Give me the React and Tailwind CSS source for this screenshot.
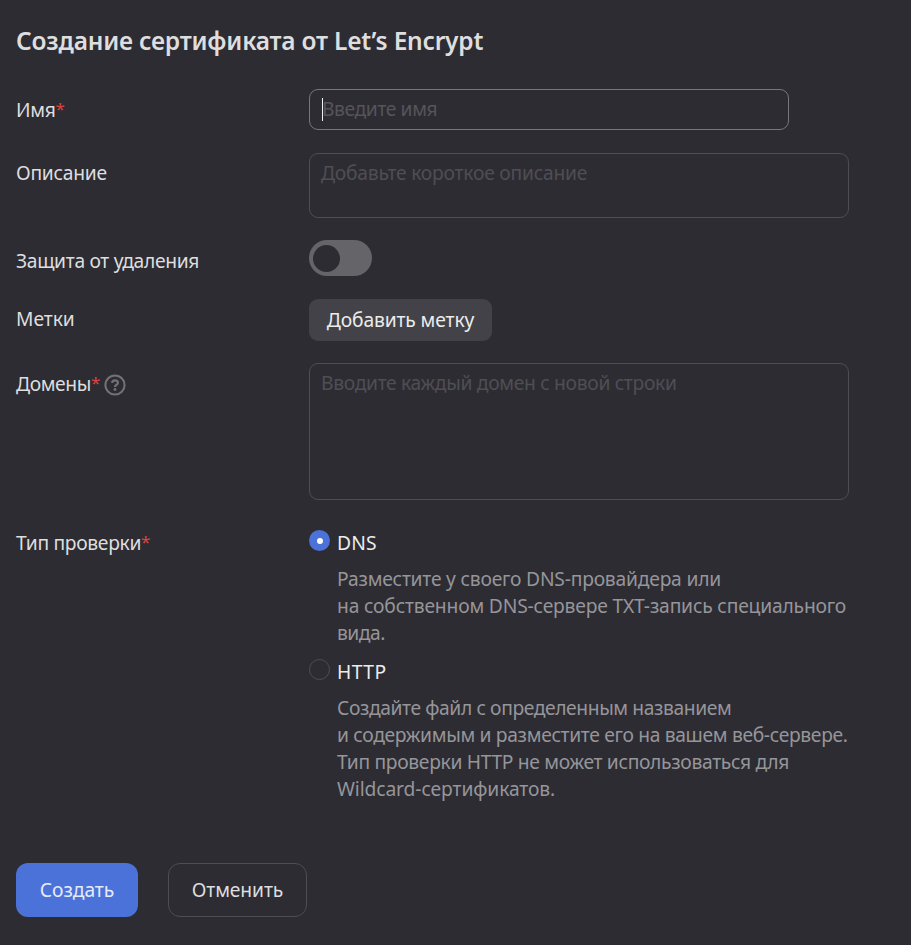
import { useState } from 'react'

const CHECK_TYPES = [
  {
    id: 'dns',
    title: 'DNS',
    titleTracking: 'tracking-[0.2px]',
    lines: [
      { text: 'Разместите у своего DNS-провайдера или', tracking: 'tracking-[-0.21px]' },
      { text: 'на собственном DNS-сервере TXT-запись специального', tracking: 'tracking-[-0.18px]' },
      { text: 'вида.', tracking: 'tracking-[-0.5px]' },
    ],
  },
  {
    id: 'http',
    title: 'HTTP',
    titleTracking: 'tracking-[0.5px]',
    lines: [
      { text: 'Создайте файл с определенным названием', tracking: 'tracking-[-0.4px]' },
      { text: 'и содержимым и разместите его на вашем веб-сервере.', tracking: 'tracking-[-0.33px]' },
      { text: 'Тип проверки HTTP не может использоваться для', tracking: 'tracking-[-0.32px]' },
      { text: 'Wildcard-сертификатов.', tracking: 'tracking-[-0.1px]' },
    ],
  },
]

function HelpIcon() {
  return (
    <svg className="size-[22px] text-[#737277]" viewBox="0 0 22 22" fill="none" stroke="currentColor" strokeWidth="2">
      <circle cx="11" cy="11" r="9.6" />
      <path d="M8.1 8.9C8.2 7.2 9.4 6.3 11 6.3c1.7 0 2.9.9 2.9 2.4 0 1.2-.8 1.8-1.6 2.3-.8.5-1.3.9-1.3 1.9" strokeWidth="2.2" />
      <circle cx="11" cy="15.5" r="1.4" fill="currentColor" stroke="none" />
    </svg>
  )
}

function Row({ label, required, help, className, labelClassName, children }) {
  return (
    <div className={`grid grid-cols-[293px_1fr] ${className}`}>
      <div className={`flex items-start ${labelClassName}`}>
        <span>{label}</span>
        {required && <span className="w-[8px] text-[17px] leading-[25px] text-[#d9453f]">*</span>}
        {help && <span className="mt-[4px] ml-[5px]"><HelpIcon /></span>}
      </div>
      <div className="flex flex-col items-start">{children}</div>
    </div>
  )
}

export default function App() {
  const [isProtected, setIsProtected] = useState(false)
  const [checkType, setCheckType] = useState('dns')

  return (
    <form
      className="h-[945px] overflow-hidden bg-[#2d2c33] px-4 font-['Noto_Sans','Liberation_Sans',sans-serif] text-[19.25px] leading-[27px] tracking-[-0.32px] text-[#dededf]"
      onSubmit={(e) => e.preventDefault()}
    >
      <h1 className="pt-[23px] text-[24.5px] leading-[36px] font-semibold tracking-[-0.2px] whitespace-nowrap">
        Создание сертификата от Let’s Encrypt
      </h1>

      <Row label="Имя" required className="mt-[30px]" labelClassName="pt-[7px]">
        <div className="relative">
          <input
            className="block h-[41px] w-[480px] rounded-[9px] border border-[#77767a] bg-transparent px-[12px] pb-[2px] tracking-[-0.4px] caret-transparent outline-none placeholder:text-[#55545a]"
            placeholder="Введите имя"
          />
          <span className="absolute top-[9px] left-[13px] h-[23px] w-px bg-[#f0f0f0]" />
        </div>
      </Row>

      <Row label="Описание" className="mt-[23px]" labelClassName="pt-[6px] tracking-[-0.25px]">
        <textarea
          className="block h-[65px] w-[540px] resize-none rounded-[9px] border border-[#4e4d53] bg-transparent px-[11px] pt-[5px] tracking-[-0.22px] outline-none placeholder:text-[#4f4e54]"
          placeholder="Добавьте короткое описание"
        />
      </Row>

      <Row label="Защита от удаления" className="mt-[22px]" labelClassName="h-[36px] pt-[7px]">
        <button
          type="button"
          role="switch"
          aria-checked={isProtected}
          onClick={() => setIsProtected(!isProtected)}
          className={`flex h-[36px] w-[63px] items-center rounded-full bg-[#656468] px-[4px] ${isProtected ? 'justify-end' : 'justify-start'}`}
        >
          <span className="size-[27px] rounded-full bg-[#2d2c33]" />
        </button>
      </Row>

      <Row label="Метки" className="mt-[23px]" labelClassName="pt-[6px] tracking-[-0.05px]">
        <button type="button" className="h-[42px] w-[183px] rounded-[9px] bg-[#434248] pb-[2px] tracking-[-0.12px] whitespace-nowrap text-[#ececec]">
          Добавить метку
        </button>
      </Row>

      <Row label="Домены" required help className="mt-[22px]" labelClassName="pt-[7px] tracking-[-0.4px]">
        <textarea
          className="block h-[137px] w-[540px] resize-none rounded-[9px] border border-[#4e4d53] bg-transparent px-[11px] pt-[5px] tracking-[-0.32px] outline-none placeholder:text-[#4f4e54]"
          placeholder="Вводите каждый домен с новой строки"
        />
      </Row>

      <Row label="Тип проверки" required className="mt-[29px]" labelClassName="">
        {CHECK_TYPES.map((type) => (
          <div key={type.id} className="mb-[12px] flex gap-[7px] last:mb-0">
            <button
              type="button"
              role="radio"
              aria-checked={checkType === type.id}
              aria-label={type.title}
              onClick={() => setCheckType(type.id)}
              className={`mt-[1px] flex size-[21px] shrink-0 items-center justify-center rounded-full ${checkType === type.id ? 'bg-[#4b72d8]' : 'border border-[#4e4d53]'}`}
            >
              {checkType === type.id && <span className="size-[6px] rounded-full bg-white" />}
            </button>
            <div>
              <div className={`text-[#ececec] ${type.titleTracking}`}>{type.title}</div>
              <div className="mt-[9px] text-[#969599]">
                {type.lines.map((line) => (
                  <div key={line.text} className={`whitespace-nowrap ${line.tracking}`}>{line.text}</div>
                ))}
              </div>
            </div>
          </div>
        ))}
      </Row>

      <div className="mt-[61px] flex gap-[30px]">
        <button type="submit" className="h-[54px] w-[122px] rounded-[12px] bg-[#4b72d8] pb-[2px] tracking-[-0.05px] text-[#e6ebf8]">
          Создать
        </button>
        <button type="button" className="h-[54px] w-[139px] rounded-[12px] border border-[#4e4d53] pb-[2px] tracking-[-0.1px]">
          Отменить
        </button>
      </div>
    </form>
  )
}
